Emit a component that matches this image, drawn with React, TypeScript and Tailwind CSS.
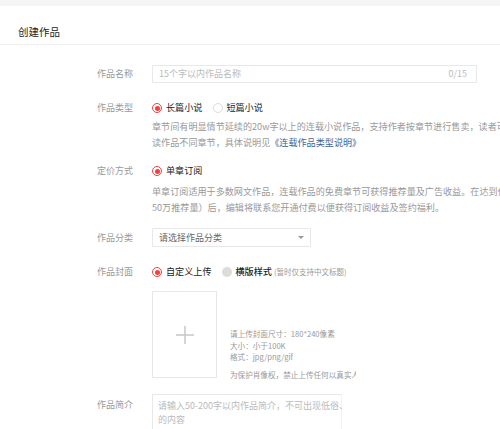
import React from "react";

const Radio = ({state, className = ""}: {state: "on" | "off" | "disabled"; className?: string}) => {
  if (state === "on") {
    return (
      <span className={`w-[10px] h-[10px] rounded-full border border-[#f04142] flex items-center justify-center shrink-0 ${className}`}>
        <span className="block w-[5px] h-[5px] rounded-full bg-[#f04142]" />
      </span>
    );
  }
  if (state === "disabled") {
    return <span className={`block w-[10px] h-[10px] rounded-full bg-[#dcdcdc] shrink-0 ${className}`} />;
  }
  return <span className={`block w-[10px] h-[10px] rounded-full border border-[#dcdcdc] shrink-0 ${className}`} />;
};

const Label = ({children, className = ""}: {children: React.ReactNode; className?: string}) => (
  <div className={`text-right text-[9px] text-[#999] ${className}`}>{children}</div>
);

const App = () => {
  return (
    <div
      className="w-[500px] h-[429px] overflow-hidden bg-white"
      style={{fontFamily: '"Noto Sans CJK SC", "Noto Sans", sans-serif'}}
    >
      <div className="h-[6px] bg-[#f5f5f5]" />
      <div className="h-[39px] border-b border-[#eeeeee] flex items-center pl-[18px] pt-[13px]">
        <h2 className="text-[10.5px] text-[#222]">创建作品</h2>
      </div>

      <div className="grid grid-cols-[133px_1fr] gap-x-[19px] pt-[20px]">
        {/* 作品名称 */}
        <Label className="leading-[18px]">作品名称</Label>
        <div className="w-[325px] h-[18px] border border-[#e8e8e8] rounded-[1px] flex items-center justify-between px-[6px] text-[9px] text-[#bbb]">
          <span>15个字以内作品名称</span>
          <span className="mr-[3px]">0/15</span>
        </div>

        {/* 作品类型 */}
        <Label className="leading-[14px] mt-[18px]">作品类型</Label>
        <div className="mt-[18px]">
          <div className="flex items-center h-[14px] text-[9.1px] text-[#222]">
            <Radio state="on" />
            <span className="ml-[4px]">长篇小说</span>
            <Radio state="off" className="ml-[11px]" />
            <span className="ml-[3px]">短篇小说</span>
          </div>
          <div className="mt-[3px] text-[9.1px] leading-[16px] text-[#999] whitespace-nowrap">
            <div>章节间有明显情节延续的20w字以上的连载小说作品，支持作者按章节进行售卖，读者可选择购买阅</div>
            <div>
              读作品不同章节，具体说明见<span className="text-[#406599]">《连载作品类型说明》</span>
            </div>
          </div>
        </div>

        {/* 定价方式 */}
        <Label className="leading-[14px] mt-[14px]">定价方式</Label>
        <div className="mt-[14px]">
          <div className="flex items-center h-[14px] text-[9.1px] text-[#222]">
            <Radio state="on" />
            <span className="ml-[4px]">单章订阅</span>
          </div>
          <div className="mt-[5px] text-[9.1px] leading-[16px] text-[#999] whitespace-nowrap">
            <div>单章订阅适用于多数网文作品，连载作品的免费章节可获得推荐量及广告收益。在达到付费标准（</div>
            <div>50万推荐量）后，编辑将联系您开通付费以便获得订阅收益及签约福利。</div>
          </div>
        </div>

        {/* 作品分类 */}
        <Label className="leading-[19px] mt-[13px]">作品分类</Label>
        <div className="mt-[13px] w-[159px] h-[19px] border border-[#e8e8e8] rounded-[1px] flex items-center justify-between pl-[6px] pr-[6px] text-[9px] text-[#666]">
          <span>请选择作品分类</span>
          <span className="w-0 h-0 border-l-[3px] border-r-[3px] border-t-[3px] border-l-transparent border-r-transparent border-t-[#999]" />
        </div>

        {/* 作品封面 */}
        <Label className="leading-[14px] mt-[18px]">作品封面</Label>
        <div className="mt-[18px]">
          <div className="flex items-center h-[14px] text-[9.1px] text-[#222]">
            <Radio state="on" />
            <span className="ml-[4px]">自定义上传</span>
            <Radio state="disabled" className="ml-[11px]" />
            <span className="ml-[3px] font-medium">横版样式</span>
            <span className="ml-[2px] text-[7.5px] text-[#999]">(暂时仅支持中文标题)</span>
          </div>
          <div className="mt-[12px] flex items-end">
            <div className="w-[65px] h-[87px] border border-[#e8e8e8] flex items-center justify-center shrink-0">
              <svg width="20" height="20" viewBox="0 0 20 20">
                <path d="M10 1v18M1 10h18" stroke="#c8c8c8" strokeWidth="1.5" />
              </svg>
            </div>
            <div className="ml-[13px] w-[126px] overflow-hidden text-[7.6px] text-[#999] leading-[11.5px] mb-[-2px] whitespace-nowrap">
              <div>请上传封面尺寸：180*240像素</div>
              <div>大小：小于100K</div>
              <div>格式：jpg/png/gif</div>
              <div className="mt-[6px]">为保护肖像权，禁止上传任何以真实人物</div>
            </div>
          </div>
        </div>

        {/* 作品简介 */}
        <Label className="leading-[14px] mt-[20px]">作品简介</Label>
        <div className="mt-[16px] w-[190px] h-[60px] border border-[#e8e8e8] border-r-[#f4f4f4] rounded-[1px] pl-[5px] pt-[4px] text-[9px] leading-[14px] text-[#bbb] whitespace-nowrap">
          <div>请输入50-200字以内作品简介，不可出现低俗、</div>
          <div>的内容</div>
        </div>
      </div>
    </div>
  );
};

export default App;
